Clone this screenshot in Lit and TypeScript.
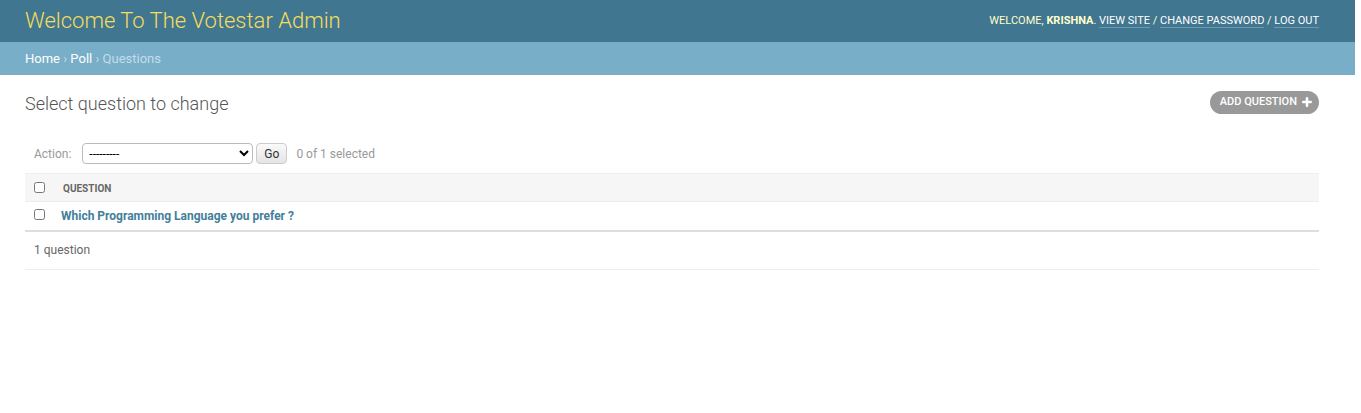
import { LitElement, html, css } from "lit";
import { customElement, state } from "lit/decorators.js";

@customElement("app-root")
class AppRoot extends LitElement {
  static styles = css`
    :host {
      display: block;
      padding-right: 6px;
      background: #fff;
      color: #333;
      font-family: Roboto, "Liberation Sans", sans-serif;
      font-size: 13px;
    }
    * { box-sizing: border-box; }
    a { text-decoration: none; color: #447e9b; }
    .header {
      display: flex;
      justify-content: space-between;
      align-items: center;
      height: 42px;
      padding: 0 36px 0 25px;
      background: #417690;
      color: #ffc;
    }
    .brand { margin: 0; font-size: 22px; line-height: 26px; font-weight: 300; color: #f5dd5d; }
    .tools { font-size: 11px; line-height: 14px; text-transform: uppercase; }
    .tools a { color: #fff; border-bottom: 1px solid rgba(255, 255, 255, 0.25); }
    .crumbs {
      padding: 9px 25px;
      background: #79aec8;
      color: #c4dce8;
      font-size: 13px;
      line-height: 15px;
    }
    .crumbs a { color: #fff; }
    .content { padding: 16px 36px 0 25px; }
    .heading { display: flex; justify-content: space-between; align-items: flex-start; }
    .title { margin: 0; font-size: 18px; line-height: 25px; font-weight: 300; color: #555; }
    .add {
      display: flex;
      align-items: center;
      gap: 5px;
      height: 23px;
      padding: 0 7px 2px 10px;
      border-radius: 12px;
      background: #999;
      color: #fff;
      font-size: 11px;
      font-weight: 500;
      text-transform: uppercase;
    }
    .actions {
      display: flex;
      align-items: center;
      margin-top: 17px;
      padding: 10px 9px 9px;
      font-size: 12px;
      color: #999;
    }
    .actions label { display: flex; align-items: center; gap: 11px; }
    select {
      width: 171px;
      height: 21px;
      padding: 0 0 0 2px;
      border: 1px solid #bbb;
      border-radius: 4px;
      background: #fff;
      color: #000;
      font: 400 12px Roboto, sans-serif;
    }
    .go {
      height: 21px;
      margin: 0 9px 0 3px;
      padding: 0 7px;
      border: 1px solid #ccc;
      border-radius: 4px;
      background: linear-gradient(#fafafa, #e4e4e4);
      color: #333;
      font: 400 12px Roboto, sans-serif;
    }
    table { width: 100%; border-collapse: collapse; }
    th { text-align: left; padding: 0; }
    thead th {
      height: 28px;
      background: #f6f6f6;
      border-top: 1px solid #eee;
      border-bottom: 1px solid #eee;
      color: #666;
      font-size: 10px;
      text-transform: uppercase;
    }
    thead .name { padding: 1px 0 0 2px; }
    .pick { width: 36px; padding: 0 0 0 9px; }
    .pick input { display: block; width: 11px; height: 11px; margin: 0; }
    tbody th { height: 28px; font-size: 12px; }
    tbody .pick { padding-bottom: 3px; }
    .count {
      margin: 0;
      padding: 11px 9px;
      border-top: 2px solid #ddd;
      border-bottom: 1px solid #eee;
      color: #666;
      font-size: 12px;
      line-height: 15px;
    }
  `;

  @state() checked = false;

  toggle = (e: Event) => {
    this.checked = (e.target as HTMLInputElement).checked;
  };

  render() {
    return html`
      <header class="header">
        <h1 class="brand">Welcome To The Votestar Admin</h1>
        <div class="tools">
          Welcome, <strong>Krishna</strong>. <a href="#">View site</a> /
          <a href="#">Change password</a> / <a href="#">Log out</a>
        </div>
      </header>
      <nav class="crumbs"><a href="#">Home</a> › <a href="#">Poll</a> › Questions</nav>
      <main class="content">
        <div class="heading">
          <h2 class="title">Select question to change</h2>
          <a class="add" href="#">Add question
            <svg width="10" height="10" viewBox="0 0 10 10" aria-hidden="true">
              <path d="M5 1.3V8.7M1.3 5H8.7" stroke="#fff" stroke-width="2.6" stroke-linecap="round" />
            </svg>
          </a>
        </div>
        <div class="actions">
          <label>Action: <select><option>---------</option><option>Delete selected questions</option></select></label>
          <button class="go" type="button">Go</button>
          <span>${this.checked ? 1 : 0} of 1 selected</span>
        </div>
        <table>
          <thead>
            <tr>
              <th class="pick"><input type="checkbox" aria-label="Select all" .checked=${this.checked} @change=${this.toggle} /></th>
              <th class="name">Question</th>
            </tr>
          </thead>
          <tbody>
            <tr>
              <th class="pick"><input type="checkbox" aria-label="Select question" .checked=${this.checked} @change=${this.toggle} /></th>
              <th><a href="#">Which Programming Language you prefer ?</a></th>
            </tr>
          </tbody>
        </table>
        <p class="count">1 question</p>
      </main>
    `;
  }
}
